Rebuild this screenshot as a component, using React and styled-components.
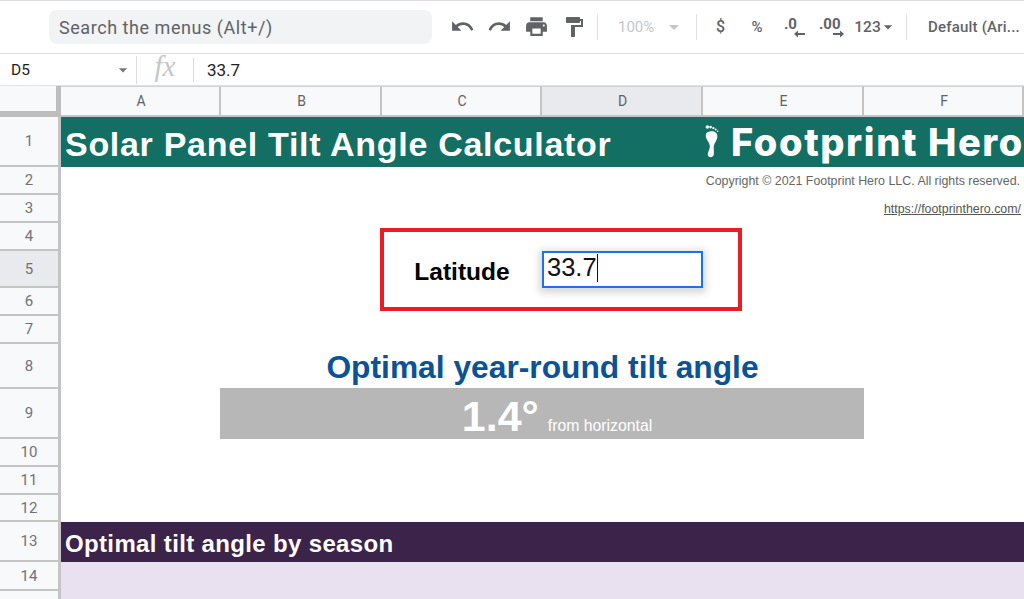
import React from "react";
import styled, { createGlobalStyle } from "styled-components";
import { MdUndo, MdRedo, MdPrint, MdFormatPaint, MdArrowDropDown } from "react-icons/md";

const Global = createGlobalStyle`
  html, body { margin: 0; padding: 0; background: #fff; }
  body { font-family: "Liberation Sans", Arial, sans-serif; overflow: hidden; }
  * { box-sizing: border-box; }
`;

const Page = styled.div`
  width: 1024px;
  height: 599px;
  overflow: hidden;
  position: relative;
  border-top: 1px solid #dadce0;
`;

const Toolbar = styled.div`
  height: 53px;
  display: flex;
  align-items: center;
  border-bottom: 1px solid #e0e0e0;
  padding-left: 49px;
  padding-bottom: 1px;
  color: #5f6368;
  white-space: nowrap;
`;

const Search = styled.div`
  width: 383px;
  height: 34px;
  border-radius: 8px;
  background: #f1f3f4;
  color: #5f6368;
  font: 400 18px/35px Roboto, sans-serif;
  letter-spacing: 0.55px;
  padding-left: 10px;
  margin-right: 12px;
`;

const ToolIcon = styled.div`
  width: ${(p) => p.$w || 37}px;
  display: flex;
  justify-content: center;
  align-items: center;
  color: #5f6368;
  font: 500 ${(p) => p.$size || 14}px Roboto, sans-serif;
`;

const Divider = styled.div`
  width: 1px;
  height: 26px;
  background: #e0e0e0;
  margin-left: ${(p) => p.$left || 0}px;
`;

const Zoom = styled.div`
  width: 98px;
  display: flex;
  align-items: center;
  padding-left: 20px;
  color: #c4c7ca;
  font: 400 15px Roboto, sans-serif;
`;

const DecWrap = styled.div`
  width: ${(p) => p.$w}px;
  margin-left: ${(p) => p.$left || 0}px;
  height: 30px;
  position: relative;
  font: 700 15px/24px Roboto, sans-serif;
  color: #5f6368;
`;

const DecArrow = styled.svg`
  position: absolute;
  left: ${(p) => p.$x}px;
  top: 18px;
`;

const FontName = styled.div`
  font: 500 15px Roboto, sans-serif;
  letter-spacing: 0.2px;
  color: #5f6368;
  margin-left: 21px;
`;

const FormulaBar = styled.div`
  height: 32px;
  display: flex;
  align-items: center;
  border-bottom: 1px solid #e0e0e0;
`;

const NameBox = styled.div`
  width: 137px;
  height: 28px;
  display: flex;
  align-items: center;
  justify-content: space-between;
  padding: 0 3px 0 11px;
  border-right: 1px solid #dadce0;
  font: 400 15.5px Roboto, sans-serif;
  color: #202124;
`;

const Fx = styled.div`
  width: 56px;
  text-align: center;
  font: italic 400 29px "Liberation Serif", serif;
  color: #c4c7c9;
  position: relative;
  top: -3px;
`;

const FormulaValue = styled.div`
  border-left: 1px solid #dadce0;
  height: 24px;
  padding-left: 13px;
  font: 400 17px/24px Roboto, sans-serif;
  color: #202124;
`;

const Sheet = styled.div`
  display: grid;
  grid-template-columns: 61px 160px 161px 160px 161px 161px 160px;
  grid-template-rows: 31px 50px 28px 28px 28px 37px 28px 28px 45px 50px 28px 28px 27px 40px 29px 20px;
  position: relative;
`;

const Corner = styled.div`
  background: #f8f9fa;
  border-right: 5px solid #bdbdbd;
  border-bottom: 6px solid #bdbdbd;
`;

const ColHead = styled.div`
  background: ${(p) => (p.$active ? "#e8eaed" : "#f8f9fa")};
  border-right: 2px solid #c4c4c4;
  border-top: 1px solid #d4d4d4;
  border-bottom: 2px solid #c4c4c4;
  display: flex;
  align-items: center;
  justify-content: center;
  color: #5f6368;
  font: 400 14px Roboto, sans-serif;
  padding-left: 2px;
`;

const RowHead = styled.div`
  grid-column: 1;
  grid-row: ${(p) => p.$row};
  background: ${(p) => (p.$active ? "#e8eaed" : "#f8f9fa")};
  border-right: 3px solid #c4c4c4;
  border-bottom: 2px solid #c4c4c4;
  display: flex;
  align-items: center;
  justify-content: center;
  color: #6f7377;
  font: 400 15px Roboto, sans-serif;
`;

const Banner = styled.div`
  grid-column: 2 / -1;
  grid-row: ${(p) => p.$row};
  background: ${(p) => p.$bg};
  display: flex;
  align-items: center;
  justify-content: space-between;
  padding: ${(p) => p.$top}px 0 0 4px;
  color: #fff;
  font: 700 ${(p) => p.$size}px "Liberation Sans", sans-serif;
  letter-spacing: ${(p) => p.$spacing || 0}px;
  white-space: nowrap;
  overflow: hidden;
`;

const Brand = styled.div`
  display: flex;
  align-items: center;
  flex: none;
  width: 320px;
  margin-top: -5px;
  gap: 11px;
  font: 800 38px Inter, sans-serif;
  letter-spacing: 1.6px;
`;

const Note = styled.div`
  grid-column: 2 / -1;
  grid-row: ${(p) => p.$row};
  text-align: right;
  padding-right: ${(p) => p.$pad}px;
  font: 400 12.4px/28px "Liberation Sans", sans-serif;
  color: #666;
  a { color: #555; }
`;

const Label = styled.div`
  grid-column: 4;
  grid-row: 6;
  display: flex;
  align-items: center;
  justify-content: center;
  padding-top: 4px;
  font: 700 24.5px "Liberation Sans", sans-serif;
  color: #000;
`;

const Editor = styled.div`
  grid-column: 5;
  grid-row: 6;
  border: 2px solid #1a73e8;
  box-shadow: 0 2px 7px 3px rgba(60, 64, 67, 0.2);
  display: flex;
  align-items: center;
  padding: 0 0 4px 3px;
  font: 400 25.5px "Liberation Sans", sans-serif;
  color: #111;
`;

const Caret = styled.span`
  width: 1px;
  height: 28px;
  background: #111;
  margin-left: 0;
`;

const Heading = styled.div`
  grid-column: 3 / 7;
  grid-row: 9;
  text-align: center;
  padding-top: 5px;
  font: 700 31.75px/37px "Liberation Sans", sans-serif;
  color: #0b5394;
`;

const ResultCell = styled.div`
  grid-column: 3 / 7;
  grid-row: 10;
  margin-left: -1px;
  margin-top: -1px;
  background: #b7b7b7;
  color: #fff;
  display: flex;
  align-items: baseline;
  justify-content: center;
  gap: 9px;
  font: 700 43px/57px "Liberation Sans", sans-serif;
  padding-left: 30px;
`;

const ResultUnit = styled.span`
  font: 400 15.8px "Liberation Sans", sans-serif;
`;

const Tint = styled.div`
  grid-column: 2 / -1;
  grid-row: ${(p) => p.$row};
  background: #eae1f0;
`;

const RedBox = styled.div`
  position: absolute;
  left: 380px;
  top: 142px;
  width: 362px;
  height: 83px;
  border: 4px solid #ed1c24;
`;

const Foot = () => (
  <svg width="18" height="38" viewBox="0 0 18 38" fill="#fff">
    <circle cx="3.800" cy="2" r="2" />
    <circle cx="7.400" cy="2.200" r="1.500" />
    <circle cx="10.600" cy="3.400" r="1.300" />
    <circle cx="13.200" cy="5" r="1.100" />
    <circle cx="15.400" cy="6.800" r="0.900" />
    <path d="M2 11.500C2 8 6 7 9 7c4 0 6.500 2.500 6 6.500-.4 4-3.500 6.500-4 10.500-.2 4 .5 6 0 9-.5 2.500-2.500 3.500-4.500 3-2-.5-2.700-2.500-2-5 1-3 2.500-5 2-8-.5-4-4.500-6.500-4.500-11.500z" />
  </svg>
);

const Arrow = ({ x, dir }) => (
  <DecArrow $x={x} width="11" height="8" viewBox="0 0 11 8" fill="#5f6368">
    {dir === "left" ? <path d="M0 4l4-3.500V3h7v2H4v2.500z" /> : <path d="M11 4L7 .5V3H0v2h7v2.500z" />}
  </DecArrow>
);

const columns = ["A", "B", "C", "D", "E", "F"];
const rows = [
  [2, "1"], [3, "2"], [4, "3"], [5, "4"], [6, "5", true], [7, "6"], [8, "7"],
  [9, "8"], [10, "9"], [11, "10"], [12, "11"], [13, "12"], [14, "13"], [15, "14"], [16, ""],
];

export default function App() {
  return (
    <Page>
      <Global />
      <Toolbar>
        <Search>Search the menus (Alt+/)</Search>
        <ToolIcon><MdUndo size={25} /></ToolIcon>
        <ToolIcon><MdRedo size={25} /></ToolIcon>
        <ToolIcon><MdPrint size={25} /></ToolIcon>
        <ToolIcon><MdFormatPaint size={24} /></ToolIcon>
        <Divider $left={5} />
        <Zoom>100%<MdArrowDropDown size={24} style={{ marginLeft: 8 }} /></Zoom>
        <Divider />
        <ToolIcon $w={47} $size={16}>$</ToolIcon>
        <ToolIcon $w={26} $size={15}>%</ToolIcon>
        <DecWrap $w={35} $left={14}>.0<Arrow x={10} dir="left" /></DecWrap>
        <DecWrap $w={35}>.00<Arrow x={14} dir="right" /></DecWrap>
        <ToolIcon $w={38} $size={15.5}>123<MdArrowDropDown size={20} style={{ margin: "0 -6px 0 -3px" }} /></ToolIcon>
        <Divider $left={14} />
        <FontName>Default (Ari...</FontName>
      </Toolbar>
      <FormulaBar>
        <NameBox>D5<MdArrowDropDown size={20} color="#777" /></NameBox>
        <Fx>fx</Fx>
        <FormulaValue>33.7</FormulaValue>
      </FormulaBar>
      <Sheet>
        <Corner />
        {columns.map((c) => (
          <ColHead key={c} $active={c === "D"}>{c}</ColHead>
        ))}
        {rows.map(([r, t, active]) => (
          <RowHead key={r} $row={r} $active={active}>{t}</RowHead>
        ))}
        <Banner $row={2} $bg="#136f63" $size={34} $spacing={0.7} $top={5}>
          Solar Panel Tilt Angle Calculator
          <Brand><Foot />Footprint Hero</Brand>
        </Banner>
        <Note $row={3} $pad={4}>Copyright © 2021 Footprint Hero LLC. All rights reserved.</Note>
        <Note $row={4} $pad={3}><a href="#top">https://footprinthero.com/</a></Note>
        <Label>Latitude</Label>
        <Editor>33.7<Caret /></Editor>
        <Heading>Optimal year-round tilt angle</Heading>
        <ResultCell>1.4°<ResultUnit>from horizontal</ResultUnit></ResultCell>
        <Banner $row={14} $bg="#3b2349" $size={24} $spacing={0.35} $top={4}>Optimal tilt angle by season</Banner>
        <Tint $row="15 / 17" />
        <RedBox />
      </Sheet>
    </Page>
  );
}
